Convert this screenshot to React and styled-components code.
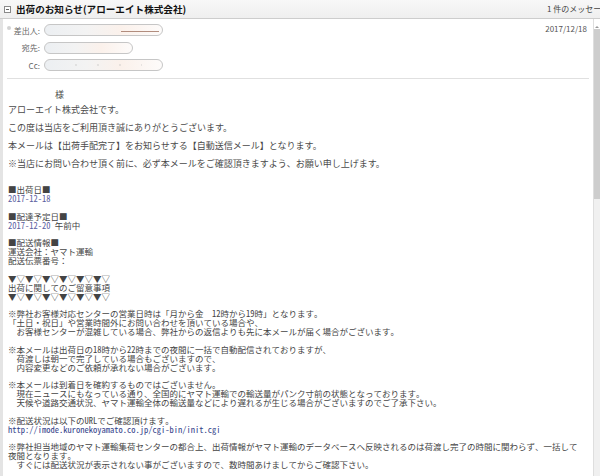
import React from 'react';
import styled, { createGlobalStyle } from 'styled-components';

const GlobalStyle = createGlobalStyle`
  html, body {
    margin: 0;
    padding: 0;
    background: #fff;
  }
  body {
    width: 600px;
    height: 476px;
    overflow: hidden;
    font-family: "Noto Sans CJK JP", "Noto Sans", sans-serif;
  }
`;

const Window = styled.div`
  width: 600px;
  height: 476px;
  display: flex;
  flex-direction: column;
  background: #fff;
  overflow: hidden;
`;

const TitleBar = styled.div`
  height: 18px;
  flex: none;
  display: flex;
  align-items: center;
  background: linear-gradient(#f8f8f8, #efefef);
  border-bottom: 1px solid #cdcdcd;
  overflow: hidden;
  white-space: nowrap;
`;

const CollapseBox = styled.span`
  flex: none;
  width: 5px;
  height: 5px;
  margin-left: 4px;
  margin-top: 1px;
  border: 1px solid #8a8a8a;
  background: #fff;
  display: flex;
  align-items: center;
  justify-content: center;

  &::after {
    content: '';
    width: 3px;
    height: 1px;
    background: #666;
  }
`;

const Title = styled.h1`
  flex: 1;
  margin: 0 0 0 5px;
  font-size: 9.6px;
  font-weight: 700;
  color: #111;
  line-height: 18px;
`;

const MessageCount = styled.span`
  flex: none;
  width: 53px;
  font-size: 8px;
  color: #444;
  line-height: 18px;
`;

const Main = styled.div`
  flex: 1;
  display: flex;
  min-height: 0;
`;

const Content = styled.div`
  flex: 1;
  display: flex;
  flex-direction: column;
  border-left: 3px solid #e4e4e4;
  min-width: 0;
`;

const Scrollbar = styled.div`
  flex: none;
  width: 6px;
  display: flex;
  flex-direction: column;
  border-left: 1px solid #dedede;
  background: #f0f0f0;
`;

const ScrollArrow = styled.div`
  height: 10px;
  background: #fff;
  display: flex;
  align-items: flex-end;
  justify-content: center;

  &::after {
    content: '';
    border-left: 2px solid transparent;
    border-right: 2px solid transparent;
    border-bottom: 2px solid #999;
    margin-bottom: 1px;
  }
`;

const ScrollThumb = styled.div`
  height: 170px;
  background: #cdcdcd;
`;

const Meta = styled.div`
  display: flex;
  flex-direction: column;
  gap: 5.5px;
  padding-top: 5px;
`;

const MetaRow = styled.div`
  display: flex;
  align-items: center;
  height: 12px;
  gap: 4px;
`;

const Label = styled.span`
  width: 37px;
  flex: none;
  display: flex;
  justify-content: ${(p) => (p.$dot ? 'space-between' : 'flex-end')};
  align-items: center;
  font-size: 8px;
  color: #666;
  white-space: nowrap;

  &::before {
    content: '';
    display: ${(p) => (p.$dot ? 'block' : 'none')};
    width: 4px;
    height: 4px;
    margin: -4px 0 0 4px;
    border-radius: 50%;
    background: #d2d2d2;
  }
`;

const Pill = styled.div`
  position: relative;
  width: ${(p) => p.$width}px;
  height: 12px;
  box-sizing: border-box;
  border: 1px solid #c6c6c6;
  border-radius: 6px;
  background: linear-gradient(to right, #eceff2 0%, #f3f3f3 35%, #fbf1eb 65%, #fdfbfa 100%);
`;

const Scribble = styled.span`
  position: absolute;
  left: 76px;
  top: 6px;
  width: 38px;
  height: 1px;
  background: #a47a68;
  opacity: 0.85;
`;

const Specks = styled.span`
  position: absolute;
  inset: 2px 20px;
  background-image: radial-gradient(circle, #bbb 0.6px, transparent 0.8px);
  background-size: 22px 6px;
  opacity: 0.7;
`;

const MetaDate = styled.span`
  margin-left: auto;
  margin-right: 6px;
  margin-top: -4px;
  font-size: 8px;
  color: #555;
`;

const Divider = styled.hr`
  margin: 7px 4px 0 4px;
  border: none;
  border-top: 1px solid #e0e0e0;
  height: 0;
`;

const Body = styled.div`
  padding: 10px 0 0 5px;
  display: flex;
  flex-direction: column;
  overflow: hidden;
`;

const Para = styled.p`
  margin: 0 0 ${(p) => (p.$tight ? 3 : 6)}px;
  padding-left: ${(p) => p.$indent || 0}px;
  font-size: 9px;
  line-height: 12px;
  color: #4a4a4a;
  white-space: nowrap;
`;

const Plain = styled.pre`
  margin: 9px 0 0;
  font-family: "Noto Sans Mono CJK JP", "Noto Sans CJK JP", monospace;
  font-size: 8.5px;
  line-height: 8.87px;
  color: #444;
  white-space: pre;
`;

const DateLink = styled.span`
  color: #5a60a0;
`;

const UrlLink = styled.span`
  color: #34428a;
`;

export default function App() {
  return (
    <Window>
      <GlobalStyle />
      <TitleBar>
        <CollapseBox />
        <Title>出荷のお知らせ(アローエイト株式会社)</Title>
        <MessageCount>1 件のメッセージ</MessageCount>
      </TitleBar>
      <Main>
        <Content>
          <Meta>
            <MetaRow>
              <Label $dot>差出人:</Label>
              <Pill $width={119}>
                <Scribble />
              </Pill>
              <MetaDate>2017/12/18</MetaDate>
            </MetaRow>
            <MetaRow>
              <Label>宛先:</Label>
              <Pill $width={89} />
            </MetaRow>
            <MetaRow>
              <Label>Cc:</Label>
              <Pill $width={119}>
                <Specks />
              </Pill>
            </MetaRow>
          </Meta>
          <Divider />
          <Body>
            <Para $tight $indent={47}>様</Para>
            <Para>アローエイト株式会社です。</Para>
            <Para>この度は当店をご利用頂き誠にありがとうございます。</Para>
            <Para>本メールは【出荷手配完了】をお知らせする【自動送信メール】となります。</Para>
            <Para>※当店にお問い合わせ頂く前に、必ず本メールをご確認頂きますよう、お願い申し上げます。</Para>
            <Plain>
              {'■出荷日■\n'}
              <DateLink>2017-12-18</DateLink>
              {'\n\n■配達予定日■\n'}
              <DateLink>2017-12-20</DateLink>
              {' 午前中\n\n■配送情報■\n運送会社：ヤマト運輸\n配送伝票番号：\n\n'}
              {'▼▽▼▽▼▽▼▽▼▽▼▽\n出荷に関してのご留意事項\n▼▽▼▽▼▽▼▽▼▽▼▽\n\n'}
              {'※弊社お客様対応センターの営業日時は「月から金　12時から19時」となります。\n'}
              {'「土日・祝日」や営業時間外にお問い合わせを頂いている場合や、\n'}
              {'　お客様センターが混雑している場合、弊社からの返信よりも先に本メールが届く場合がございます。\n\n'}
              {'※本メールは出荷日の18時から22時までの夜間に一括で自動配信されておりますが、\n'}
              {'　荷渡しは朝一で完了している場合もございますので、\n'}
              {'　内容変更などのご依頼が承れない場合がございます。\n\n'}
              {'※本メールは到着日を確約するものではございません。\n'}
              {'　現在ニュースにもなっている通り、全国的にヤマト運輸での輸送量がパンク寸前の状態となっております。\n'}
              {'　天候や道路交通状況、ヤマト運輸全体の輸送量などにより遅れるが生じる場合がございますのでご了承下さい。\n\n'}
              {'※配送状況は以下のURLでご確認頂けます。\n'}
              <UrlLink>http://imode.kuronekoyamato.co.jp/cgi-bin/init.cgi</UrlLink>
              {'\n\n※弊社担当地域のヤマト運輸集荷センターの都合上、出荷情報がヤマト運輸のデータベースへ反映されるのは荷渡し完了の時間に関わらず、一括して\n'}
              {'夜間となります。\n'}
              {'　すぐには配送状況が表示されない事がございますので、数時間あけましてからご確認下さい。'}
            </Plain>
          </Body>
        </Content>
        <Scrollbar>
          <ScrollArrow />
          <ScrollThumb />
        </Scrollbar>
      </Main>
    </Window>
  );
}
